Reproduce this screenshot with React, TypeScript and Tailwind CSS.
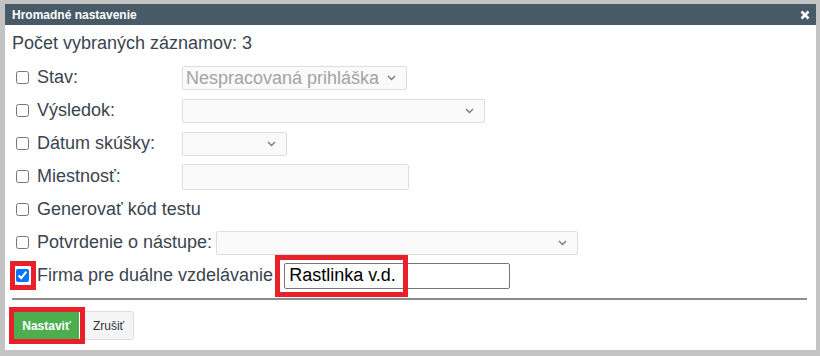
import React from "react";

const font = { fontFamily: '"Liberation Sans", Arial, sans-serif' };

function Chevron() {
  return (
    <svg width="9" height="6" viewBox="0 0 9 6" className="shrink-0">
      <path d="M1 1 L4.5 4.5 L8 1" fill="none" stroke="#7a7a7a" strokeWidth="1.4" />
    </svg>
  );
}

function FakeSelect({ w, h, text, disabled }: { w: string; h: string; text?: string; disabled?: boolean }) {
  return (
    <div className={`${w} ${h} flex items-center justify-between border border-[#dedede] rounded-[2px] bg-[#fafafa] pl-[3px] pr-[10px]`}>
      <span className={`text-[18px] leading-none ${disabled ? "text-[#a3a3a3]" : "text-[#333]"}`}>{text ?? ""}</span>
      <Chevron />
    </div>
  );
}

function Row({ children }: { children: React.ReactNode }) {
  return <div className="h-[33px] flex items-center">{children}</div>;
}

function Check({ checked }: { checked?: boolean }) {
  return (
    <input
      type="checkbox"
      defaultChecked={checked}
      className="w-[13px] h-[13px] m-0 ml-[11px] mr-[8px] shrink-0"
    />
  );
}

export default function App() {
  return (
    <div className="w-[820px] h-[356px] bg-[#c3c3c3] pt-[4px] pl-[5px] pr-[4px] pb-[6px]" style={font}>
      <div className="bg-white h-full flex flex-col">
        <div className="h-[21px] bg-[#475a66] flex items-center justify-between pl-[7px] pr-[6px]">
          <span className="text-white font-bold text-[12px]">Hromadné nastavenie</span>
          <svg width="10" height="10" viewBox="0 0 10 10">
            <path d="M1.5 1.5 L8.5 8.5 M8.5 1.5 L1.5 8.5" stroke="white" strokeWidth="2.6" strokeLinecap="butt" />
          </svg>
        </div>
        <div className="h-[36px] flex items-center pl-[7px] text-[18px] text-[#3a4450]">Počet vybraných záznamov: 3</div>
        <div className="text-[18px] text-[#3a4450]">
          <Row>
            <Check />
            <span className="w-[145px]">Stav:</span>
            <FakeSelect w="w-[225px]" h="h-[24px]" text="Nespracovaná prihláška" disabled />
          </Row>
          <Row>
            <Check />
            <span className="w-[145px]">Výsledok:</span>
            <FakeSelect w="w-[303px]" h="h-[24px]" />
          </Row>
          <Row>
            <Check />
            <span className="w-[145px]">Dátum skúšky:</span>
            <FakeSelect w="w-[105px]" h="h-[24px]" />
          </Row>
          <Row>
            <Check />
            <span className="w-[145px]">Miestnosť:</span>
            <div className="w-[227px] h-[26px] border border-[#dedede] rounded-[2px] bg-[#fafafa]" />
          </Row>
          <Row>
            <Check />
            <span>Generovať kód testu</span>
          </Row>
          <Row>
            <Check />
            <span className="mr-[4px]">Potvrdenie o nástupe:</span>
            <FakeSelect w="w-[362px]" h="h-[24px]" />
          </Row>
          <Row>
            <span className="relative flex items-center">
              <Check checked />
              <span className="absolute left-[5px] -top-[8px] w-[26px] h-[29px] border-[5px] border-[#e8202a] pointer-events-none" />
            </span>
            <span className="mr-[11px]">Firma pre duálne vzdelávanie</span>
            <div className="relative">
              <div className="w-[226px] h-[26px] border border-[#767676] rounded-[2px] bg-white flex items-center pl-[4px] text-black text-[18px]">
                Rastlinka v.d.
              </div>
              <span className="absolute -left-[9px] -top-[8px] w-[133px] h-[42px] border-[5px] border-[#e8202a] pointer-events-none" />
            </div>
          </Row>
        </div>
        <div className="mt-[6px] mx-[7px] h-[2px] bg-[#8c8c8c] w-[795px]" />
        <div className="flex items-center pl-[9px] mt-[11px] gap-[4px]">
          <div className="relative">
            <div className="w-[65px] h-[27px] bg-[#4cae4f] text-white font-bold text-[12px] flex items-center justify-center">Nastaviť</div>
            <span className="absolute -left-[5px] -top-[5px] w-[76px] h-[37px] border-[5px] border-[#e8202a] pointer-events-none" />
          </div>
          <div className="w-[51px] h-[29px] bg-[#f5f5f8] border border-[#dcdce0] rounded-[3px] text-[#333] text-[12px] flex items-center justify-center">Zrušiť</div>
        </div>
      </div>
    </div>
  );
}
